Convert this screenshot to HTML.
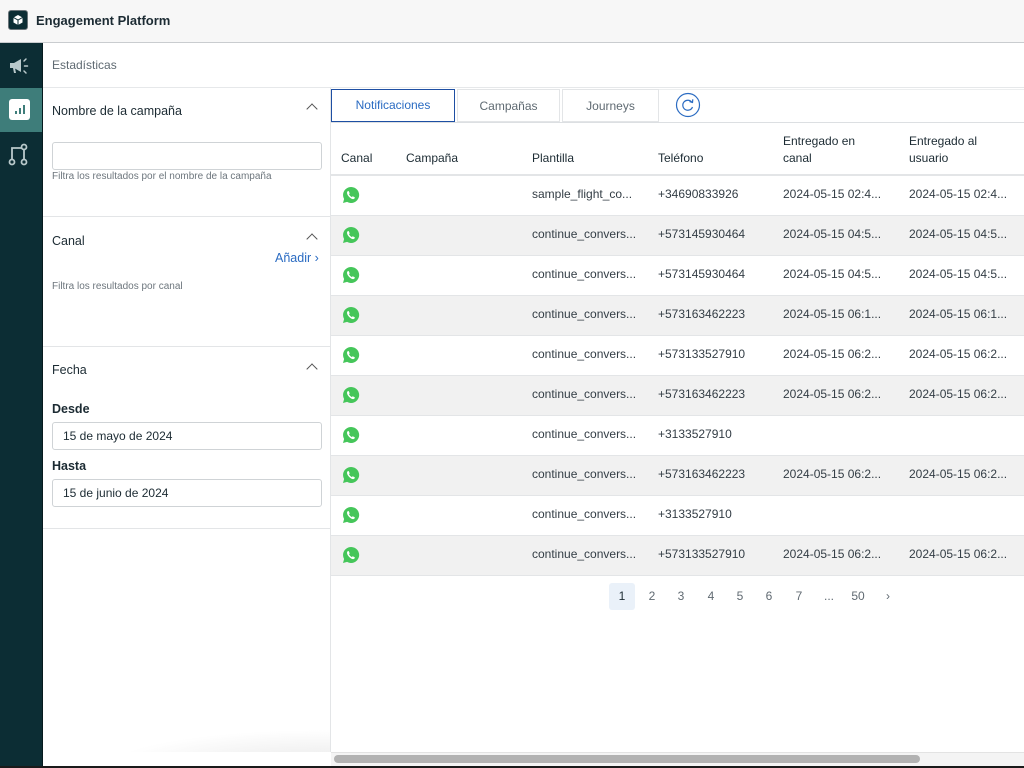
<!DOCTYPE html>
<html><head><meta charset="utf-8"><style>
*{margin:0;padding:0;box-sizing:border-box}
body{width:1024px;height:768px;overflow:hidden;background:#fff;font-family:"Liberation Sans",sans-serif;color:#1c2b33;position:relative}
.a{position:absolute}
.hdr{left:0;top:0;width:1024px;height:43px;background:#f7f7f7;border-bottom:1px solid #c9cccf}
.side{left:0;top:43px;width:43px;height:725px;background:#0c2d34;border-right:1px solid #061a1e}
.t13{font-size:12px}
.row{left:331px;width:693px;height:40px;border-bottom:1px solid #e3e5e7}
.row.g{background:#f1f1f1}
.c{position:absolute;top:-1px;line-height:39px;font-size:12px;color:#333d45;white-space:nowrap}
.wa{position:absolute;left:11px;top:10px}
.inp{position:absolute;left:52px;width:270px;height:28px;border:1px solid #cfd3d6;border-radius:3px;font-size:12px;line-height:26px;padding-left:10px;color:#1c2b33}
.chev{position:absolute;left:308px;width:8px;height:8px;border-left:1.3px solid #555;border-top:1.3px solid #555;transform:rotate(45deg)}
.pg{position:absolute;top:583px;width:26px;height:27px;line-height:27px;text-align:center;font-size:12px;color:#606a72}
</style></head><body>
<div class="a hdr"></div>
<div class="a" style="left:8px;top:10px;width:20px;height:20px;background:#0c2d34;border-radius:3px;border:1px solid #6b7479"></div>
<svg class="a" style="left:12px;top:14px" width="12" height="12" viewBox="0 0 12 12"><path d="M6 1L10.5 3.5V8.5L6 11L1.5 8.5V3.5Z" fill="#fff"/><path d="M1.5 3.5L6 6L10.5 3.5M6 6V11" stroke="#0c2d34" stroke-width="1" fill="none"/></svg>
<div class="a" style="left:36px;top:13px;font-size:13px;font-weight:bold;color:#1c2b33">Engagement Platform</div>
<div class="a side"></div>
<div class="a" style="left:0;top:88px;width:42px;height:44px;background:#3e7d7a"></div>
<svg class="a" style="left:8px;top:56px" width="22" height="20" viewBox="0 0 22 20"><path d="M2 7h4l7-4v13l-7-4H2z" fill="#b9c9cb"/><path d="M5 12l1 5h2l-1-5z" fill="#b9c9cb"/><path d="M16 5l2-2M16.5 10h3M16 15l2 2" stroke="#b9c9cb" stroke-width="1.5" stroke-linecap="round"/></svg>
<div class="a" style="left:9px;top:99px;width:21px;height:21px;background:#fff;border-radius:3px"></div>
<svg class="a" style="left:9px;top:99px" width="21" height="21"><rect x="6" y="12" width="2" height="3" fill="#3e7d7a"/><rect x="10" y="9" width="2" height="6" fill="#3e7d7a"/><rect x="14" y="6" width="2" height="9" fill="#3e7d7a"/></svg>
<svg class="a" style="left:8px;top:143px" width="22" height="24" viewBox="0 0 22 24"><g stroke="#b9c9cb" stroke-width="1.8" fill="none"><circle cx="4" cy="19" r="2.5"/><circle cx="16" cy="19" r="2.5"/><circle cx="16" cy="4" r="2.5"/><path d="M4 16.5V5h9.5M16 6.5v10"/></g></svg>
<div class="a" style="left:52px;top:58px;font-size:12px;color:#5f6a72">Estadísticas</div>
<div class="a" style="left:43px;top:87px;width:981px;border-top:1px solid #e6e8ea"></div>
<div class="a" style="left:330px;top:87px;height:665px;border-left:1px solid #e3e5e7"></div>
<div class="a" style="left:52px;top:104px;font-size:12.5px;color:#1c2b33">Nombre de la campaña</div>
<div class="chev" style="top:105px"></div>
<div class="inp" style="top:142px"></div>
<div class="a" style="left:52px;top:171px;font-size:10px;color:#6d767d">Filtra los resultados por el nombre de la campaña</div>
<div class="a" style="left:43px;top:216px;width:287px;border-top:1px solid #e3e5e7"></div>
<div class="a" style="left:52px;top:234px;font-size:12.5px">Canal</div>
<div class="chev" style="top:235px"></div>
<div class="a" style="left:275px;top:251px;font-size:12.5px;color:#2a6bc2">Añadir ›</div>
<div class="a" style="left:52px;top:281px;font-size:10px;color:#6d767d">Filtra los resultados por canal</div>
<div class="a" style="left:43px;top:346px;width:287px;border-top:1px solid #e3e5e7"></div>
<div class="a" style="left:52px;top:363px;font-size:12.5px">Fecha</div>
<div class="chev" style="top:365px"></div>
<div class="a" style="left:52px;top:402px;font-size:12.5px;font-weight:bold">Desde</div>
<div class="inp" style="top:422px">15 de mayo de 2024</div>
<div class="a" style="left:52px;top:459px;font-size:12.5px;font-weight:bold">Hasta</div>
<div class="inp" style="top:479px">15 de junio de 2024</div>
<div class="a" style="left:43px;top:528px;width:287px;border-top:1px solid #e3e5e7"></div>
<div class="a" style="left:43px;top:712px;width:287px;height:40px;background:radial-gradient(ellipse 220px 40px at 280px 58px,#e6e6e6,rgba(255,255,255,0))"></div>
<div class="a" style="left:331px;top:122px;width:693px;border-top:1px solid #dcdfe2"></div>
<div class="a" style="left:331px;top:89px;width:124px;height:33px;border:1.5px solid #1e4fa3;text-align:center;line-height:30px;font-size:12px;color:#2a6bc2">Notificaciones</div>
<div class="a" style="left:457px;top:89px;width:103px;height:33px;border:1px solid #e3e5e7;text-align:center;line-height:32px;font-size:12px;color:#5f6a72">Campañas</div>
<div class="a" style="left:562px;top:89px;width:97px;height:33px;border:1px solid #e3e5e7;text-align:center;line-height:32px;font-size:12px;color:#5f6a72">Journeys</div>
<div class="a" style="left:659px;top:89px;width:365px;border-top:1px solid #eceeef"></div>
<svg class="a" style="left:675px;top:92px" width="26" height="26" viewBox="0 0 26 26"><circle cx="13" cy="13" r="11.5" stroke="#2a6bc2" stroke-width="1.2" fill="none"/><path d="M17 10.5A5 5 0 1 0 17.5 15" stroke="#2a6bc2" stroke-width="1.2" fill="none"/><path d="M14.5 9.5L17.5 10.5L17.8 7.3" stroke="#2a6bc2" stroke-width="1.2" fill="none"/></svg>
<div class="a" style="left:331px;top:123px;width:693px;height:53px;border-bottom:2px solid #e3e5e7"></div>
<div class="a t13" style="left:341px;top:151px;font-size:12px">Canal</div>
<div class="a t13" style="left:406px;top:151px">Campaña</div>
<div class="a t13" style="left:532px;top:151px">Plantilla</div>
<div class="a t13" style="left:658px;top:151px">Teléfono</div>
<div class="a t13" style="left:783px;top:133px;line-height:17px">Entregado en<br>canal</div>
<div class="a t13" style="left:909px;top:133px;line-height:17px">Entregado al<br>usuario</div>
<div id="rows"></div>
<div class="pg" style="left:609px;background:#eaf1f9;color:#1c2b33;border-radius:3px">1</div>
<div class="pg" style="left:639px">2</div>
<div class="pg" style="left:668px">3</div>
<div class="pg" style="left:698px">4</div>
<div class="pg" style="left:727px">5</div>
<div class="pg" style="left:756px">6</div>
<div class="pg" style="left:786px">7</div>
<div class="pg" style="left:816px">...</div>
<div class="pg" style="left:845px">50</div>
<div class="pg" style="left:875px">›</div>
<div class="a" style="left:331px;top:752px;width:693px;height:14px;background:#f4f4f4;border-top:1px solid #e3e3e3"></div>
<div class="a" style="left:334px;top:755px;width:586px;height:8px;background:#b2b2b2;border-radius:4px"></div>
<div class="a" style="left:0;top:766px;width:1024px;height:2px;background:#1a1a1a"></div>
<script>
var d=[["sample_flight_co...","+34690833926","2024-05-15 02:4...","2024-05-15 02:4..."],
["continue_convers...","+573145930464","2024-05-15 04:5...","2024-05-15 04:5..."],
["continue_convers...","+573145930464","2024-05-15 04:5...","2024-05-15 04:5..."],
["continue_convers...","+573163462223","2024-05-15 06:1...","2024-05-15 06:1..."],
["continue_convers...","+573133527910","2024-05-15 06:2...","2024-05-15 06:2..."],
["continue_convers...","+573163462223","2024-05-15 06:2...","2024-05-15 06:2..."],
["continue_convers...","+3133527910","",""],
["continue_convers...","+573163462223","2024-05-15 06:2...","2024-05-15 06:2..."],
["continue_convers...","+3133527910","",""],
["continue_convers...","+573133527910","2024-05-15 06:2...","2024-05-15 06:2..."]];
var wa='<svg class="wa" width="18" height="18" viewBox="0 0 18 18"><path d="M9 1a8 8 0 0 0-6.9 12L1 17l4.1-1.1A8 8 0 1 0 9 1z" fill="#45c65a"/><path d="M6.2 5c.3 0 .5 0 .7.5l.7 1.6c.1.2 0 .4-.1.6l-.5.6c.6 1.2 1.6 2.2 2.8 2.8l.6-.6c.2-.2.4-.2.6-.1l1.6.8c.3.1.3.4.2.7-.2.7-.9 1.2-1.6 1.2C8.6 13 5 9.4 5 6.7c0-.8.5-1.5 1.2-1.7z" fill="#fff"/></svg>';
var h='';d.forEach(function(r,i){h+='<div class="a row'+(i%2?' g':'')+'" style="top:'+(176+i*40)+'px">'+wa+'<div class="c" style="left:201px">'+r[0]+'</div><div class="c" style="left:327px">'+r[1]+'</div><div class="c" style="left:452px">'+r[2]+'</div><div class="c" style="left:578px">'+r[3]+'</div></div>'});
document.getElementById('rows').innerHTML=h;
</script>
</body></html>
